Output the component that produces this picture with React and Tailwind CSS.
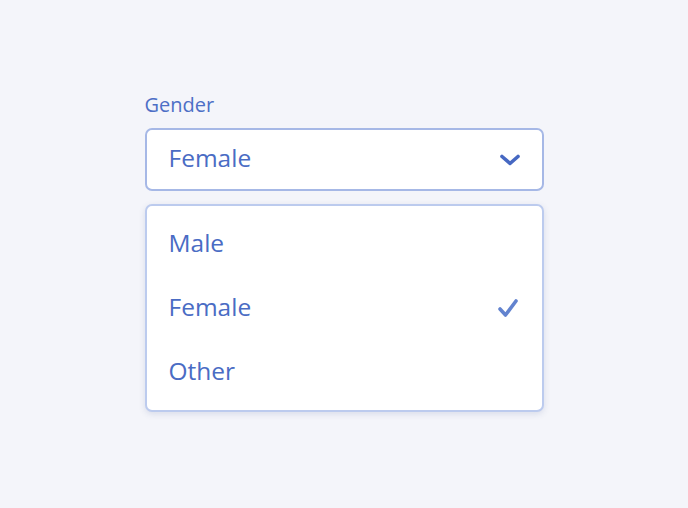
export default function App() {
  const options = ["Male", "Female", "Other"];
  const selected = "Female";
  return (
    <div
      className="w-[688px] h-[508px] bg-[#f4f5fa] flex justify-center"
      style={{ fontFamily: '"Open Sans", "Noto Sans", sans-serif' }}
    >
      <div className="w-[399px] pt-[91px]">
        <div className="text-[20px] leading-[28px] text-[#4d6fc6] mb-[9px]">Gender</div>
        <div className="h-[63px] bg-white border-2 border-[#a6b8e6] rounded-[7px] flex items-center justify-between pl-[22px] pr-[21px]">
          <span className="text-[24.5px] text-[#4a6cc4] -mt-[2px]">{selected}</span>
          <svg width="22" height="14" viewBox="0 0 22 14" fill="none">
            <path d="M3 3.5 L11 10.5 L19 3.5" stroke="#4668c2" strokeWidth="3.6" strokeLinecap="round" strokeLinejoin="round" />
          </svg>
        </div>
        <div className="mt-[13px] bg-white border-2 border-[#bccbee] rounded-[7px] pt-[5px] pb-[7px] shadow-[0_2px_6px_rgba(60,80,140,0.15)]">
          {options.map((o) => (
            <div key={o} className="h-16 flex items-center justify-between pl-[22px] pr-[23px]">
              <span className="text-[24.5px] text-[#4a6cc4]">{o}</span>
              {o === selected && (
                <svg width="22" height="20" viewBox="0 0 22 20" fill="none" className="mt-[1px]">
                  <path d="M3 11 L8.5 17 L19 3" stroke="#6283cf" strokeWidth="3.6" strokeLinecap="round" strokeLinejoin="round" />
                </svg>
              )}
            </div>
          ))}
        </div>
      </div>
    </div>
  );
}
